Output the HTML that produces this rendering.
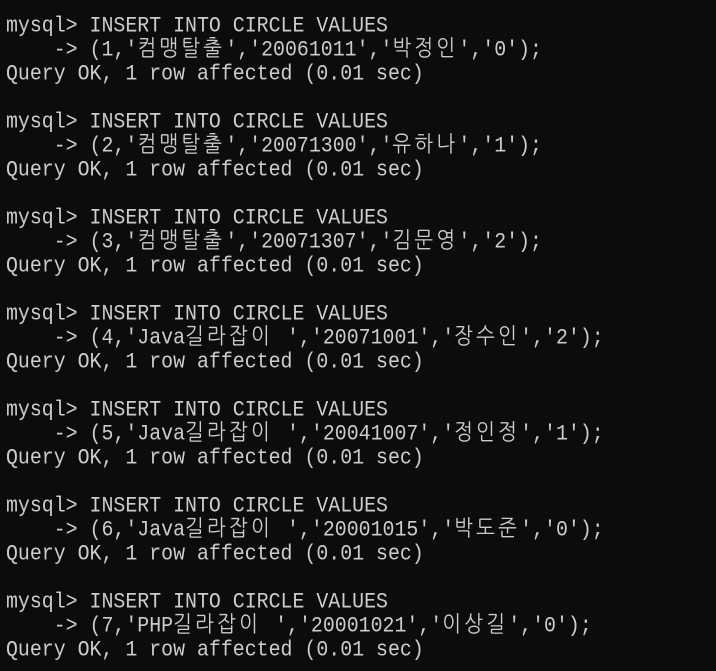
<!DOCTYPE html>
<html><head><meta charset="utf-8"><style>
html,body{margin:0;padding:0;background:#0c0c0c;width:716px;height:671px;overflow:hidden}
.t{position:absolute;left:6px;top:14px;color:#cccccc;font-family:"Liberation Mono","NanumGothic",monospace;font-size:19.9px;line-height:24px}
.t div{height:24px;white-space:pre;overflow:visible;transform:scaleY(1.12);transform-origin:0 60%}
.k{font-family:"NanumGothic","Noto Sans CJK KR",sans-serif;letter-spacing:3.3px;display:inline-block;line-height:20px}
.j{margin-right:14px}
</style></head><body><div class="t">
<div>mysql&gt; INSERT INTO CIRCLE VALUES</div>
<div>    -&gt; (1,'<span class="k">컴맹탈출</span>','20061011','<span class="k">박정인</span>','0');</div>
<div>Query OK, 1 row affected (0.01 sec)</div>
<div> </div>
<div>mysql&gt; INSERT INTO CIRCLE VALUES</div>
<div>    -&gt; (2,'<span class="k">컴맹탈출</span>','20071300','<span class="k">유하나</span>','1');</div>
<div>Query OK, 1 row affected (0.01 sec)</div>
<div> </div>
<div>mysql&gt; INSERT INTO CIRCLE VALUES</div>
<div>    -&gt; (3,'<span class="k">컴맹탈출</span>','20071307','<span class="k">김문영</span>','2');</div>
<div>Query OK, 1 row affected (0.01 sec)</div>
<div> </div>
<div>mysql&gt; INSERT INTO CIRCLE VALUES</div>
<div>    -&gt; (4,'Java<span class="k j">길라잡이</span>','20071001','<span class="k">장수인</span>','2');</div>
<div>Query OK, 1 row affected (0.01 sec)</div>
<div> </div>
<div>mysql&gt; INSERT INTO CIRCLE VALUES</div>
<div>    -&gt; (5,'Java<span class="k j">길라잡이</span>','20041007','<span class="k">정인정</span>','1');</div>
<div>Query OK, 1 row affected (0.01 sec)</div>
<div> </div>
<div>mysql&gt; INSERT INTO CIRCLE VALUES</div>
<div>    -&gt; (6,'Java<span class="k j">길라잡이</span>','20001015','<span class="k">박도준</span>','0');</div>
<div>Query OK, 1 row affected (0.01 sec)</div>
<div> </div>
<div>mysql&gt; INSERT INTO CIRCLE VALUES</div>
<div>    -&gt; (7,'PHP<span class="k j">길라잡이</span>','20001021','<span class="k">이상길</span>','0');</div>
<div>Query OK, 1 row affected (0.01 sec)</div>
</div></body></html>
